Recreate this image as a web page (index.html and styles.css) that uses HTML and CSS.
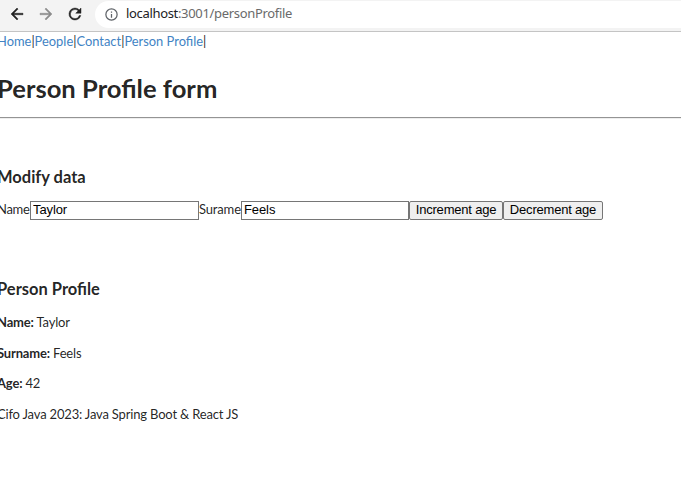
FILE: index.html
```html
<!DOCTYPE html>
<html lang="en">
<head>
<meta charset="utf-8">
<title>Person Profile</title>
<link rel="stylesheet" href="styles.css">
</head>
<body>
<header class="toolbar">
  <svg class="nav-icon" viewBox="0 0 24 24"><path d="M20 11H7.83l5.59-5.59L12 4l-8 8 8 8 1.41-1.41L7.83 13H20z"/></svg>
  <svg class="nav-icon muted" viewBox="0 0 24 24"><path d="M4 11h12.17l-5.59-5.59L12 4l8 8-8 8-1.41-1.41L16.17 13H4z"/></svg>
  <svg class="nav-icon" viewBox="0 0 24 24"><path d="M17.65 6.35A7.96 7.96 0 0 0 12 4a8 8 0 1 0 7.73 10h-2.08A6 6 0 1 1 12 6c1.66 0 3.14.69 4.22 1.78L13 11h7V4z"/></svg>
  <div class="address">
    <svg class="info" viewBox="0 0 24 24"><path d="M11 7h2v2h-2zm0 4h2v6h-2zm1-9a10 10 0 1 0 0 20 10 10 0 0 0 0-20zm0 18a8 8 0 1 1 0-16 8 8 0 0 1 0 16z"/></svg>
    <span class="url"><b>localhost</b>:3001/personProfile</span>
  </div>
</header>
<main class="page">
  <nav class="links"><a>Home</a>|<a>People</a>|<a>Contact</a>|<a>Person Profile</a>|</nav>
  <h1>Person Profile form</h1>
  <hr>
  <h3 class="modify">Modify data</h3>
  <div class="form"><label class="name">Name</label><input value="Taylor"><label class="surname">Surame</label><input class="last" value="Feels"><button class="inc">Increment age</button><button class="dec">Decrement age</button></div>
  <h3 class="profile">Person Profile</h3>
  <p><b>Name:</b> Taylor</p>
  <p><b>Surname:</b> Feels</p>
  <p><b>Age:</b> 42</p>
  <p>Cifo Java 2023: Java Spring Boot &amp; React JS</p>
</main>
</body>
</html>
```
FILE: styles.css
```css
* { box-sizing: border-box; }
body { margin: 0; background: #fff; overflow: hidden; color: rgba(0,0,0,.87); font: 13px/18px Lato, sans-serif; }
.toolbar { display: flex; align-items: center; height: 32px; padding: 0 0 3px 8px; border-bottom: 1px solid #c4c4c4; background: #f3f3f3; }
.nav-icon { width: 18px; height: 18px; margin-right: 11px; fill: #222; stroke: #222; stroke-width: .6; flex: none; }
.muted { fill: #8c8c8c; stroke: #8c8c8c; }
.address { display: flex; align-items: center; flex: 1; height: 27px; padding-left: 9px; border-radius: 14px 0 0 14px; background: #fff; }
.info { width: 15px; height: 15px; margin-right: 7px; fill: #5f6368; }
.url { font: 13px/18px "Noto Sans", sans-serif; letter-spacing: -.33px; color: #6a6a6a; position: relative; top: -1px; }
.url b { font-weight: 400; color: #202124; }
.page { margin-left: -3px; }
.links { height: 18px; font-size: 12.9px; }
a { color: #4183c4; }
h1, h3 { margin: 0; font-weight: 700; }
h1 { margin-top: 22px; font-size: 25.6px; line-height: 33px; }
hr { margin: 12px 0 0; border: 0; height: 2px; border-top: 1px solid #949494; border-bottom: 1px solid #eee; }
h3 { font-size: 16.5px; line-height: 21px; }
.modify { margin-top: 48px; }
.form { display: flex; align-items: center; margin-top: 12px; height: 20px; }
.name { width: 33px; letter-spacing: -.3px; }
.surname { width: 42px; letter-spacing: -.16px; }
label { flex: none; position: relative; top: -1px; }
input { width: 169px; height: 19px; padding: 0 2px 2px; border: 1px solid #767676; font: 13px "Liberation Sans", sans-serif; letter-spacing: -.1px; }
.last { width: 168px; }
button { flex: none; height: 19px; padding: 0 0 2px; border: 1px solid #767676; border-radius: 2px; background: #efefef; color: #000; font: 13px/15px "Liberation Sans", sans-serif; letter-spacing: -.2px; }
.inc { width: 94px; }
.dec { width: 100px; }
.profile { margin-top: 59px; margin-bottom: 13px; }
p { margin: 0 0 12.5px; letter-spacing: -.18px; }
```
